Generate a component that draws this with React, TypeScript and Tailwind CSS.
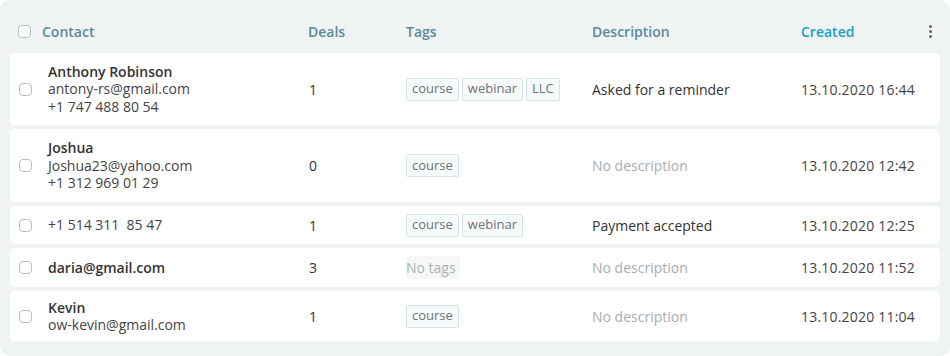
import React from "react";

type Row = {
  name?: string;
  email?: string;
  phone?: string;
  boldEmail?: boolean;
  deals: number;
  tags: string[];
  desc?: string;
  created: string;
  h: string;
};

const rows: Row[] = [
  { name: "Anthony Robinson", email: "antony-rs@gmail.com", phone: "+1 747 488 80 54", deals: 1, tags: ["course", "webinar", "LLC"], desc: "Asked for a reminder", created: "13.10.2020 16:44", h: "h-[72px]" },
  { name: "Joshua", email: "Joshua23@yahoo.com", phone: "+1 312 969 01 29", deals: 0, tags: ["course"], created: "13.10.2020 12:42", h: "h-[73px]" },
  { phone: "+1 514 311  85 47", deals: 1, tags: ["course", "webinar"], desc: "Payment accepted", created: "13.10.2020 12:25", h: "h-[38px]" },
  { email: "daria@gmail.com", boldEmail: true, deals: 3, tags: [], created: "13.10.2020 11:52", h: "h-[39px]" },
  { name: "Kevin", email: "ow-kevin@gmail.com", deals: 1, tags: ["course"], created: "13.10.2020 11:04", h: "h-[50px]" },
];

function Checkbox() {
  return <div className="w-[13px] h-[13px] rounded-[4px] border border-[#b9bec1] bg-white" />;
}

export default function App() {
  return (
    <div
      className="w-[950px] h-[356px] bg-[#eff3f4] rounded-[10px] text-[14px] text-[#333]"
      style={{ fontFamily: '"Open Sans", "Noto Sans", sans-serif' }}
    >
      <div className="h-[53px] pt-[10px] pl-[18px] grid grid-cols-[24px_266px_98px_186px_209px_128px_1fr] items-center font-semibold text-[#5a8a9b]">
        <Checkbox />
        <div>Contact</div>
        <div>Deals</div>
        <div>Tags</div>
        <div>Description</div>
        <div className="text-[#199fbd]">Created</div>
        <div className="flex flex-col gap-[2px]">
          <span className="w-[3px] h-[3px] rounded-full bg-[#666]" />
          <span className="w-[3px] h-[3px] rounded-full bg-[#666]" />
          <span className="w-[3px] h-[3px] rounded-full bg-[#666]" />
        </div>
      </div>
      <div className="flex flex-col gap-[4px] px-[10px]">
        {rows.map((r, i) => (
          <div
            key={i}
            className={`${r.h} bg-white rounded-[5px] pl-[9px] grid grid-cols-[29px_260px_98px_186px_209px_1fr] items-center`}
          >
            <Checkbox />
            <div className="leading-[17.5px] flex flex-col">
              {r.name && <div className="font-semibold text-[#333]">{r.name}</div>}
              {r.email && (
                <div className={r.boldEmail ? "font-semibold text-[#333]" : "text-[#444]"}>{r.email}</div>
              )}
              {r.phone && <div className="text-[#444] whitespace-pre">{r.phone}</div>}
            </div>
            <div className="pl-[1px] text-[#333]">{r.deals}</div>
            <div className="flex gap-[3px]">
              {r.tags.length === 0 ? (
                <span className="h-[23px] pr-[4px] flex items-center bg-[#f6f8f8] text-[#adb1b3] rounded-[2px]">
                  No tags
                </span>
              ) : (
                r.tags.map((t) => (
                  <span
                    key={t}
                    className="h-[23px] px-[5px] flex items-center border border-[#d6e3e5] bg-[#f7fafa] text-[#6b7376] text-[13px] rounded-[2px]"
                  >
                    {t}
                  </span>
                ))
              )}
            </div>
            <div className={r.desc ? "text-[#333]" : "text-[#a9adb0]"}>{r.desc ?? "No description"}</div>
            <div className="text-[#444] tracking-[0.2px]">{r.created}</div>
          </div>
        ))}
      </div>
    </div>
  );
}
